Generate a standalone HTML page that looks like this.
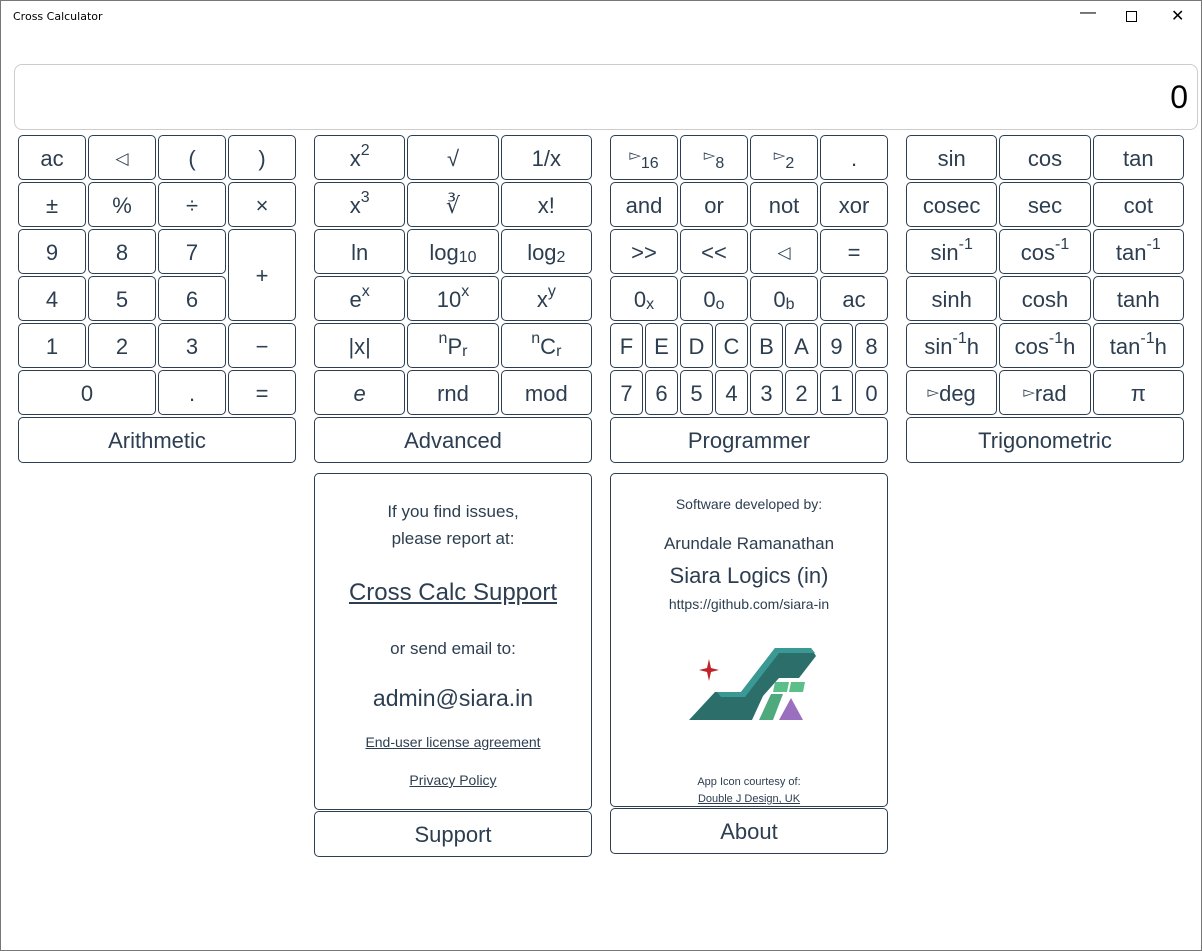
<!DOCTYPE html>
<html><head><meta charset="utf-8"><style>
*{box-sizing:border-box;margin:0;padding:0}
body{width:1202px;height:951px;background:#fff;font-family:"Liberation Sans",sans-serif;color:#2c3e50;position:relative;overflow:hidden;box-shadow:inset 0 0 0 1px #777;}
.title{position:absolute;left:13px;top:10px;color:#000;font-family:"DejaVu Sans",sans-serif;font-size:11px}
.wc{position:absolute;top:4px;font-size:16px;color:#000}
.disp{position:absolute;left:14px;top:64px;width:1184px;height:66px;border:1px solid #ccc;border-radius:8px;text-align:right;font-size:32px;padding:14px 9px 0 0;color:#000}
.g{position:absolute;top:135px;width:278px;display:grid;gap:2px;grid-auto-rows:45px}
.g div,.lab,.pan{border:1px solid #2c3e50;border-radius:5px;display:flex;align-items:center;justify-content:center;font-size:22px}
.g div,.lab{padding-top:2px}
.g4{grid-template-columns:repeat(4,1fr)}
.g3{grid-template-columns:repeat(3,1fr)}
.g8{grid-template-columns:repeat(8,1fr)}
.s2{grid-column:span 2}
.r2{grid-row:span 2}
sup{font-size:16px;position:relative;top:-8px;vertical-align:baseline}
sub{font-size:16px;position:relative;top:5px;vertical-align:baseline}
.lab{position:absolute;width:278px;height:46px;font-size:22px}
.pan{position:absolute;width:278px;flex-direction:column;justify-content:flex-start;text-align:center}
a{color:#2c3e50;text-decoration:underline}
.tr{font-size:15px;position:relative;top:-4px}
.tl{font-size:17px}
</style></head><body>
<div class="title">Cross Calculator</div>
<div class="wc" style="left:1080px">&#8212;</div>
<div class="wc" style="left:1126px;top:11px;width:11px;height:11px;border:1px solid #000"></div>
<div class="wc" style="left:1171px;top:6px">&#10005;</div>
<div class="disp">0</div>

<div class="g g4" style="left:18px">
<div>ac</div><div><span class="tl">&#9665;</span></div><div>(</div><div>)</div>
<div>±</div><div>%</div><div>÷</div><div>×</div>
<div>9</div><div>8</div><div>7</div><div class="r2">+</div>
<div>4</div><div>5</div><div>6</div>
<div>1</div><div>2</div><div>3</div><div>−</div>
<div class="s2">0</div><div>.</div><div>=</div>
</div>
<div class="lab" style="left:18px;top:417px">Arithmetic</div>

<div class="g g3" style="left:314px">
<div>x<sup>2</sup></div><div>√</div><div>1/x</div>
<div>x<sup>3</sup></div><div>∛</div><div>x!</div>
<div>ln</div><div>log<sub>10</sub></div><div>log<sub>2</sub></div>
<div>e<sup>x</sup></div><div>10<sup>x</sup></div><div>x<sup>y</sup></div>
<div>|x|</div><div><sup>n</sup>P<sub>r</sub></div><div><sup>n</sup>C<sub>r</sub></div>
<div><i>e</i></div><div>rnd</div><div>mod</div>
</div>
<div class="lab" style="left:314px;top:417px">Advanced</div>

<div class="g g8" style="left:610px">
<div class="s2"><span class="tr">&#9659;</span><sub>16</sub></div><div class="s2"><span class="tr">&#9659;</span><sub>8</sub></div><div class="s2"><span class="tr">&#9659;</span><sub>2</sub></div><div class="s2">.</div>
<div class="s2">and</div><div class="s2">or</div><div class="s2">not</div><div class="s2">xor</div>
<div class="s2">&gt;&gt;</div><div class="s2">&lt;&lt;</div><div class="s2"><span class="tl">&#9665;</span></div><div class="s2">=</div>
<div class="s2">0<sub>x</sub></div><div class="s2">0<sub>o</sub></div><div class="s2">0<sub>b</sub></div><div class="s2">ac</div>
<div>F</div><div>E</div><div>D</div><div>C</div><div>B</div><div>A</div><div>9</div><div>8</div>
<div>7</div><div>6</div><div>5</div><div>4</div><div>3</div><div>2</div><div>1</div><div>0</div>
</div>
<div class="lab" style="left:610px;top:417px">Programmer</div>

<div class="g g3" style="left:906px">
<div>sin</div><div>cos</div><div>tan</div>
<div>cosec</div><div>sec</div><div>cot</div>
<div>sin<sup>-1</sup></div><div>cos<sup>-1</sup></div><div>tan<sup>-1</sup></div>
<div>sinh</div><div>cosh</div><div>tanh</div>
<div>sin<sup>-1</sup>h</div><div>cos<sup>-1</sup>h</div><div>tan<sup>-1</sup>h</div>
<div><span class="tr" style="top:-2px">&#9659;</span>deg</div><div><span class="tr" style="top:-2px">&#9659;</span>rad</div><div>π</div>
</div>
<div class="lab" style="left:906px;top:417px">Trigonometric</div>

<div class="pan" style="left:314px;top:473px;height:337px">
<div style="font-size:17px;line-height:27px;margin-top:24px">If you find issues,<br>please report at:</div>
<div style="font-size:24px;margin-top:27px"><a>Cross Calc Support</a></div>
<div style="font-size:17px;margin-top:32px">or send email to:</div>
<div style="font-size:23px;margin-top:26px">admin@siara.in</div>
<div style="font-size:14px;margin-top:22px"><a>End-user license agreement</a></div>
<div style="font-size:14px;margin-top:22px"><a>Privacy Policy</a></div>
</div>
<div class="lab" style="left:314px;top:811px">Support</div>

<div class="pan" style="left:610px;top:473px;height:334px">
<div style="font-size:14px;margin-top:22px">Software developed by:</div>
<div style="font-size:17px;margin-top:22px">Arundale Ramanathan</div>
<div style="font-size:22px;margin-top:9px">Siara Logics (in)</div>
<div style="font-size:14px;margin-top:7px">https://github.com/siara-in</div>
<svg width="140" height="90" viewBox="0 0 140 90" style="margin-top:30px">
<path d="M10 78 L36 50 L62 50 L96 6 L132 6 L137 14 L120 36 L100 36 L84 54 L73 78 Z" fill="#2c6e6a"/>
<path d="M38 50 L62 50 L96 6 L132 6 L136 11 L100 11 L66 55 L42 55Z" fill="#3a9994"/>
<path d="M30 17 L32 26 L40 28 L32 30 L30 39 L28 30 L20 28 L28 26Z" fill="#c0232a"/>
<path d="M80 78 L92 52 L104 52 L94 78Z" fill="#4eaa7c"/>
<path d="M96 40 L110 40 L108 50 L94 50Z M112 40 L126 40 L124 50 L110 50Z" fill="#5cbf8a"/>
<path d="M100 78 L112 56 L124 78Z" fill="#9b6fc0"/>
</svg>
<div style="font-size:11px;margin-top:44px">App Icon courtesy of:</div>
<div style="font-size:11px;margin-top:5px"><a>Double J Design, UK</a></div>
</div>
<div class="lab" style="left:610px;top:808px">About</div>
</body></html>
